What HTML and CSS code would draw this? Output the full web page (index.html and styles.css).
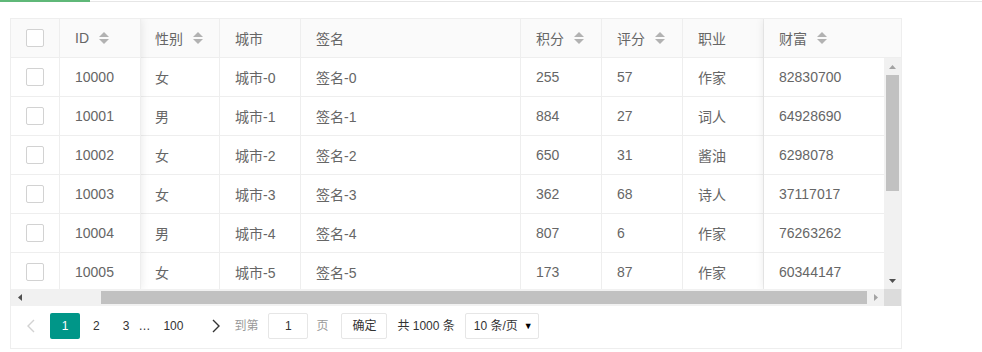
FILE: index.html
```html
<!DOCTYPE html>
<html lang="zh-CN">
<head>
<meta charset="utf-8">
<title>table</title>
<link rel="stylesheet" href="styles.css">
</head>
<body>
<div class="tabbar"><div class="tab-active"></div><div class="tab-rest"></div></div>
<div class="page">
  <div class="tbl">
    <div class="tbl-main">
      <div class="grp grp-left">
        <div class="hrow">
          <div class="cell c1 center"><span class="cb"></span></div>
          <div class="cell c2">ID<svg class="sort" width="10" height="12" viewBox="0 0 10 12"><polygon points="0,5 5,0 10,5"/><polygon points="0,7 10,7 5,12"/></svg></div>
        </div>
        <div class="body">
          <div class="row"><div class="cell c1 center"><span class="cb"></span></div><div class="cell c2">10000</div></div>
          <div class="row"><div class="cell c1 center"><span class="cb"></span></div><div class="cell c2">10001</div></div>
          <div class="row"><div class="cell c1 center"><span class="cb"></span></div><div class="cell c2">10002</div></div>
          <div class="row"><div class="cell c1 center"><span class="cb"></span></div><div class="cell c2">10003</div></div>
          <div class="row"><div class="cell c1 center"><span class="cb"></span></div><div class="cell c2">10004</div></div>
          <div class="row"><div class="cell c1 center"><span class="cb"></span></div><div class="cell c2">10005</div></div>
        </div>
      </div>
      <div class="grp grp-mid">
        <div class="hrow">
          <div class="cell c3">性别<svg class="sort" width="10" height="12" viewBox="0 0 10 12"><polygon points="0,5 5,0 10,5"/><polygon points="0,7 10,7 5,12"/></svg></div>
          <div class="cell c4">城市</div>
          <div class="cell c5">签名</div>
          <div class="cell c6">积分<svg class="sort" width="10" height="12" viewBox="0 0 10 12"><polygon points="0,5 5,0 10,5"/><polygon points="0,7 10,7 5,12"/></svg></div>
          <div class="cell c7">评分<svg class="sort" width="10" height="12" viewBox="0 0 10 12"><polygon points="0,5 5,0 10,5"/><polygon points="0,7 10,7 5,12"/></svg></div>
          <div class="cell c8">职业</div>
        </div>
        <div class="body">
          <div class="row"><div class="cell c3">女</div><div class="cell c4">城市-0</div><div class="cell c5">签名-0</div><div class="cell c6">255</div><div class="cell c7">57</div><div class="cell c8">作家</div></div>
          <div class="row"><div class="cell c3">男</div><div class="cell c4">城市-1</div><div class="cell c5">签名-1</div><div class="cell c6">884</div><div class="cell c7">27</div><div class="cell c8">词人</div></div>
          <div class="row"><div class="cell c3">女</div><div class="cell c4">城市-2</div><div class="cell c5">签名-2</div><div class="cell c6">650</div><div class="cell c7">31</div><div class="cell c8">酱油</div></div>
          <div class="row"><div class="cell c3">女</div><div class="cell c4">城市-3</div><div class="cell c5">签名-3</div><div class="cell c6">362</div><div class="cell c7">68</div><div class="cell c8">诗人</div></div>
          <div class="row"><div class="cell c3">男</div><div class="cell c4">城市-4</div><div class="cell c5">签名-4</div><div class="cell c6">807</div><div class="cell c7">6</div><div class="cell c8">作家</div></div>
          <div class="row"><div class="cell c3">女</div><div class="cell c4">城市-5</div><div class="cell c5">签名-5</div><div class="cell c6">173</div><div class="cell c7">87</div><div class="cell c8">作家</div></div>
        </div>
      </div>
      <div class="grp grp-right">
        <div class="hrow">
          <div class="cell c9h">财富<svg class="sort" width="10" height="12" viewBox="0 0 10 12"><polygon points="0,5 5,0 10,5"/><polygon points="0,7 10,7 5,12"/></svg></div>
        </div>
        <div class="body body-r">
          <div class="col9">
            <div class="row"><div class="cell c9">82830700</div></div>
            <div class="row"><div class="cell c9">64928690</div></div>
            <div class="row"><div class="cell c9">6298078</div></div>
            <div class="row"><div class="cell c9">37117017</div></div>
            <div class="row"><div class="cell c9">76263262</div></div>
            <div class="row"><div class="cell c9">60344147</div></div>
          </div>
          <div class="vscroll">
            <div class="sbtn"><svg width="7" height="4" viewBox="0 0 7 4"><polygon class="arr-off" points="0,4 3.5,0 7,4"/></svg></div>
            <div class="vthumb"></div>
            <div class="sfill"></div>
            <div class="sbtn"><svg width="7" height="4" viewBox="0 0 7 4"><polygon class="arr-on" points="0,0 7,0 3.5,4"/></svg></div>
          </div>
        </div>
      </div>
    </div>
    <div class="hbar">
      <div class="hscroll">
        <div class="sbtn"><svg width="4" height="7" viewBox="0 0 4 7"><polygon class="arr-on" points="4,0 4,7 0,3.5"/></svg></div>
        <div class="sfill"></div>
        <div class="hthumb"></div>
        <div class="sbtn"><svg width="4" height="7" viewBox="0 0 4 7"><polygon class="arr-off" points="0,0 4,3.5 0,7"/></svg></div>
      </div>
      <div class="corner"></div>
    </div>
    <div class="pager">
      <span class="pg pg-prev"><svg width="8" height="14" viewBox="0 0 8 14"><polyline points="7,1 1,7 7,13" fill="none" stroke="#d2d2d2" stroke-width="1.4"/></svg></span>
      <span class="pg pg-curr">1</span>
      <span class="pg pg-2">2</span>
      <span class="pg pg-3">3</span>
      <span class="pg pg-spr">…</span>
      <span class="pg pg-last">100</span>
      <span class="pg pg-next"><svg width="8" height="14" viewBox="0 0 8 14"><polyline points="1,1 7,7 1,13" fill="none" stroke="#333" stroke-width="1.4"/></svg></span>
      <span class="skip">到第</span>
      <span class="skip-input">1</span>
      <span class="skip skip-page">页</span>
      <span class="btn-ok">确定</span>
      <span class="count">共 1000 条</span>
      <span class="limits">10 条/页<span class="caret">▼</span></span>
    </div>
  </div>
</div>
</body>
</html>
```
FILE: styles.css
```css
* { box-sizing: border-box; }
html, body { margin: 0; padding: 0; background: #fff; }
body {
  font-family: "Liberation Sans", "Noto Sans CJK SC", sans-serif;
  font-size: 14px;
  color: #666;
}
.tabbar { display: flex; align-items: flex-start; height: 2px; }
.tab-active { width: 90px; height: 2px; background: #5fb878; }
.tab-rest { flex: 1; height: 1px; margin-top: 1px; background: #e6e6e6; }

.page { padding: 16px 0 0 10px; }
.tbl { width: 892px; border: 1px solid #eee; background: #fff; }
.tbl-main { display: flex; overflow: hidden; }
.grp { display: flex; flex-direction: column; background: #fff; }
.grp-left { position: relative; z-index: 2; box-shadow: 1px 0 8px rgba(0,0,0,.08); }
.grp-right { position: relative; z-index: 2; box-shadow: -1px 0 8px rgba(0,0,0,.08); }
.grp-mid { position: relative; z-index: 1; }

.hrow { display: flex; background: #fafafa; }
.row { display: flex; }
.body { height: 231px; overflow: hidden; }
.body-r { display: flex; }

.cell {
  height: 39px;
  padding: 0 15px;
  display: flex;
  align-items: center;
  border-right: 1px solid #eee;
  border-bottom: 1px solid #eee;
  white-space: nowrap;
}
.center { justify-content: center; padding: 0; }
.c1 { width: 49px; }
.c2 { width: 81px; }
.c3 { width: 79px; padding-left: 14px; }
.c4 { width: 81px; }
.c5 { width: 220px; }
.c6 { width: 81px; }
.c7 { width: 81px; }
.c8 { width: 81px; }
.c9 { width: 120px; border-right: 0; }
.c9h { width: 137px; border-right: 0; }

.cb {
  display: block;
  width: 18px; height: 18px;
  border: 1px solid #d2d2d2;
  border-radius: 2px;
  background: #fff;
}
.sort { margin-left: 10px; fill: #b2b2b2; flex: none; }

.vscroll {
  width: 17px; height: 231px;
  background: #f1f1f1;
  display: flex; flex-direction: column;
}
.sbtn { width: 17px; height: 17px; display: flex; align-items: center; justify-content: center; flex: none; }
.vthumb { height: 116px; margin: 0 2px; background: #c1c1c1; flex: none; }
.sfill { flex: 1; }
.arr-on { fill: #505050; }
.arr-off { fill: #a3a3a3; }

.hbar { display: flex; height: 17px; }
.hscroll { width: 873px; display: flex; background: #f1f1f1; }
.hthumb { width: 766px; margin: 2px 0; background: #c1c1c1; }
.corner { width: 17px; background: #dcdcdc; }

.pager {
  height: 42px;
  padding: 7px 0 0 6px;
  display: flex;
  align-items: flex-start;
  font-size: 12px;
  color: #333;
}
.pg { height: 26px; line-height: 26px; padding: 0 10px; display: inline-flex; align-items: center; }
.pg-prev { width: 28px; justify-content: center; }
.pg-curr { width: 30px; padding: 0; justify-content: center; margin-left: 5px; background: #009688; color: #fff; border-radius: 2px; }
.pg-2 { margin-left: 3px; }
.pg-3 { margin-left: 3px; }
.pg-spr { padding: 0; margin-left: -1px; }
.pg-last { padding: 0 11px 0 13px; }
.pg-next { margin-left: 8px; width: 28px; justify-content: center; }
.skip { height: 26px; line-height: 26px; color: #999; margin-left: 4px; }
.skip-page { margin-left: 8px; }
.skip-input {
  width: 40px; height: 26px; line-height: 24px;
  margin-left: 10px;
  border: 1px solid #e6e6e6; border-radius: 2px;
  text-align: center; color: #333;
}
.btn-ok {
  width: 46px; height: 26px; line-height: 24px;
  margin-left: 13px;
  border: 1px solid #e6e6e6; border-radius: 2px;
  text-align: center; color: #333;
}
.count { height: 26px; line-height: 26px; margin-left: 10px; }
.limits {
  width: 74px; height: 26px; line-height: 24px;
  margin-left: 10px;
  padding-left: 8px;
  border: 1px solid #e6e6e6; border-radius: 2px;
  color: #333;
  display: flex; align-items: center;
}
.caret { font-size: 9px; margin-left: 6px; color: #000; }
```
